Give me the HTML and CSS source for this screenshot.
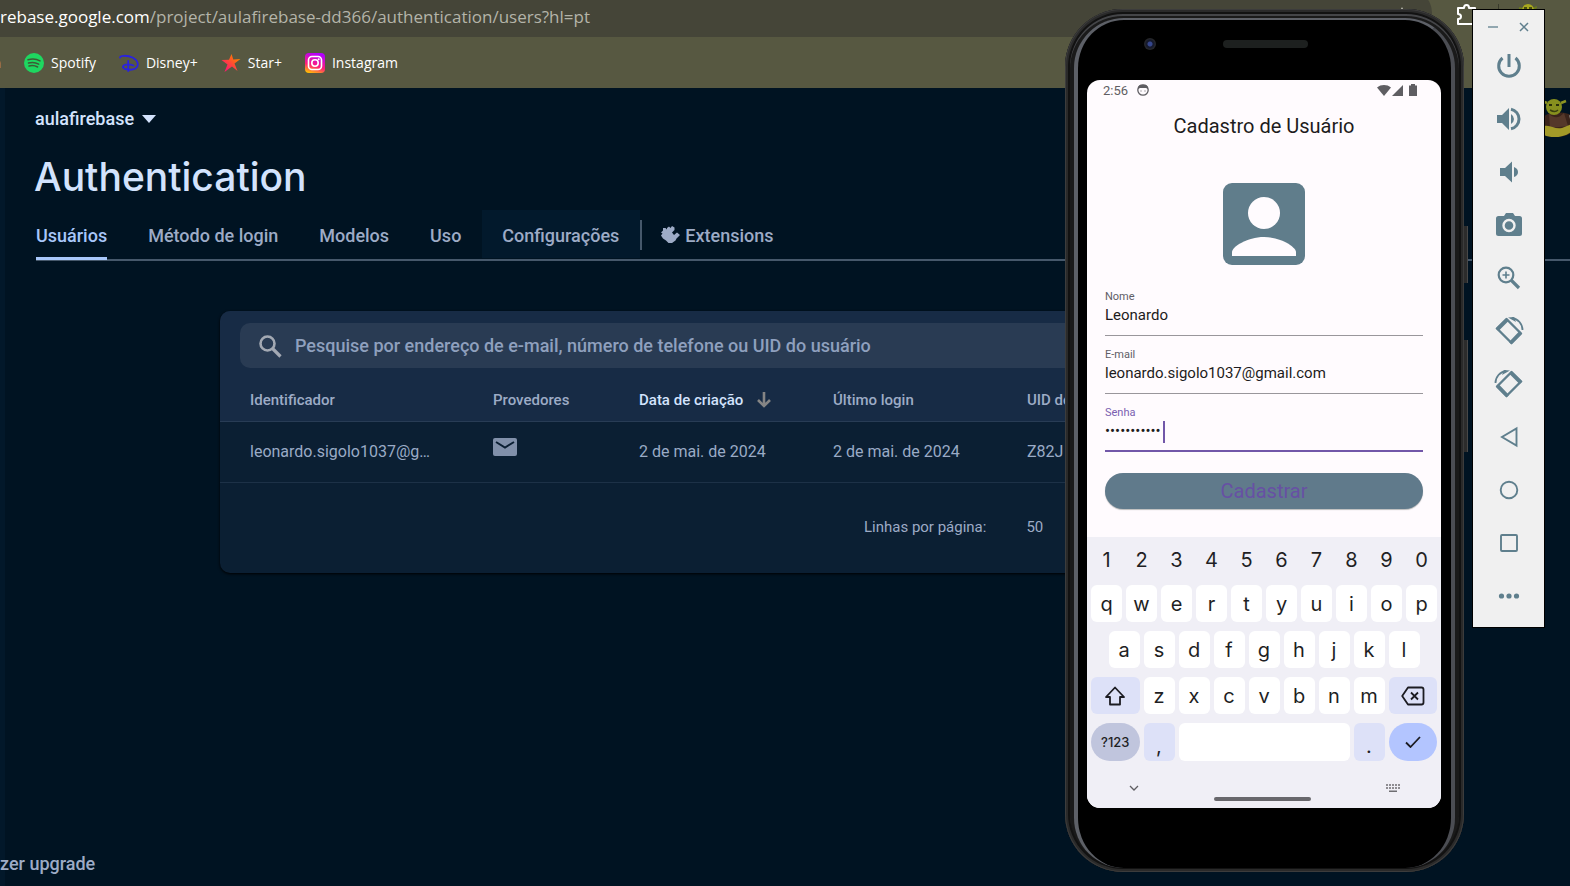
FILE: index.html
```html
<!DOCTYPE html>
<html lang="pt-BR">
<head>
<meta charset="utf-8">
<title>Authentication</title>
<link rel="stylesheet" href="styles.css">
</head>
<body>
<div class="desktop">
  <header class="browser">
    <div class="url-row">
      <div class="url"><span class="url-host">rebase.google.com</span>/project/aulafirebase-dd366/authentication/users?hl=pt
        <svg class="share" width="8" height="10" viewBox="0 0 8 10"><path d="M4 0l2 5v5H2V5z" fill="#e8e8e0"/></svg>
      </div>
      <div class="ext">
        <svg width="22" height="22" viewBox="0 0 22 22"><path d="M2 4h6c0-4 5-4 5 0h6v16H2v-5c4 0 4-5 0-5z" fill="none" stroke="#fff" stroke-width="2" stroke-linejoin="round"/></svg>
        <span class="ext-sep"></span>
        <svg width="18" height="18" viewBox="0 0 18 18"><path d="M4 5l-4-1M14 5l4-2" stroke="#6b7a1c" stroke-width="2"/><circle cx="9" cy="6" r="6" fill="#a8a81e"/><path d="M5 4h3M10 4h3" stroke="#2a2f0b" stroke-width="1.500"/></svg>
      </div>
    </div>
    <nav class="bookmarks" aria-label="Favoritos">
      <a class="bookmark cut" href="#">n</a>
      <a class="bookmark" href="#"><svg width="20" height="20" viewBox="0 0 20 20"><circle cx="10" cy="10" r="10" fill="#1ed760"/><path d="M4 6.800c4-1.200 8.500-.9 12 1.100M4.500 10c3.500-1 7.200-.6 10.200 1.100M5 13c3-.8 6-.5 8.600 1" fill="none" stroke="#3d5a35" stroke-width="1.500" stroke-linecap="round"/></svg>Spotify</a>
      <a class="bookmark" href="#"><svg width="20" height="20" viewBox="0 0 20 20"><path d="M1 4.500C1 2.500 8 1.800 14 4.800c5 2.700 6.500 8 2.500 10.700C13 17.500 6 17 4 14.500c-.8-3 5-4 10.500-2M9.200 8v10" fill="none" stroke="#2a22e0" stroke-width="1.800" stroke-linecap="round"/></svg>Disney+</a>
      <a class="bookmark" href="#"><svg width="20" height="20" viewBox="0 0 20 20"><defs><linearGradient id="star" x1="0" y1="1" x2="1" y2="0"><stop offset=".2" stop-color="#ff1a6c"/><stop offset=".8" stop-color="#ff7a00"/></linearGradient></defs><path d="M10.500 1l1.800 5.500 7.200-.5-6 4.500 3 7.500-5.500-4.500L3.500 19l3-7.500L.5 7l7.500-.3z" fill="url(#star)"/></svg>Star+</a>
      <a class="bookmark" href="#"><svg width="20" height="20" viewBox="0 0 20 20"><defs><linearGradient id="ig" x1=".2" y1="1" x2=".5" y2="0"><stop offset="0" stop-color="#ffc400"/><stop offset=".4" stop-color="#ff1f7a"/><stop offset="1" stop-color="#b300ff"/></linearGradient></defs><rect width="20" height="20" rx="4" fill="url(#ig)"/><rect x="3.500" y="3.500" width="13" height="13" rx="3.500" fill="none" stroke="#fff" stroke-width="1.600"/><circle cx="10" cy="10" r="3.200" fill="none" stroke="#fff" stroke-width="1.600"/><circle cx="13.700" cy="6.300" r="1" fill="#fff"/></svg>Instagram</a>
    </nav>
  </header>

  <div class="console">
    <aside class="rail"><span class="upgrade">zer upgrade</span></aside>
    <main class="main">
      <button class="project" type="button">aulafirebase
        <svg width="14" height="8" viewBox="0 0 14 8"><path d="M0 0h14L7 8z" fill="currentColor"/></svg>
      </button>
      <h1 class="title">Authentication</h1>
      <nav class="tabs">
        <a class="tab active" href="#">Usuários</a>
        <a class="tab" href="#">Método de login</a>
        <a class="tab" href="#">Modelos</a>
        <a class="tab" href="#">Uso</a>
        <a class="tab hover" href="#">Configurações</a>
        <span class="tab-sep"></span>
        <a class="tab with-icon" href="#"><svg width="19" height="18" viewBox="0 0 19 18"><path d="M2 2h2.500L6 3.500V2l2-1.500L9.500 2 11 0l2.500 1.500V4L11 6.500 13 9l3-2.500L19 9l-3.500 3.500-1 2L11 17H7.500L5 14.500 2 12.500 0 9.500l1.500-2L0 6.500 2 4.500z" fill="currentColor"/></svg>Extensions</a>
      </nav>

      <section class="card">
        <div class="card-head">
          <label class="search">
            <svg width="24" height="24" viewBox="0 0 24 24"><circle cx="9.500" cy="9.500" r="7" fill="none" stroke="#a3a9b3" stroke-width="2.600"/><path d="M14.500 14.500l8 8" stroke="#a3a9b3" stroke-width="3.200"/></svg>
            <input class="search-input" type="text" aria-label="Pesquisar usuários" placeholder="Pesquise por endereço de e-mail, número de telefone ou UID do usuário">
          </label>
        </div>
        <table class="users">
          <colgroup><col class="c-id"><col class="c-prov"><col class="c-date"><col class="c-date"><col></colgroup>
          <thead>
            <tr><th>Identificador</th><th>Provedores</th><th class="sorted"><span class="sort">Data de criação <svg width="14" height="16" viewBox="0 0 14 16"><path d="M7 0v13M1 8l6 6 6-6" fill="none" stroke="#858585" stroke-width="2.600"/></svg></span></th><th>Último login</th><th>UID do usuário</th></tr>
          </thead>
          <tbody>
            <tr><td>leonardo.sigolo1037@g…</td><td><svg class="mail" width="24" height="18" viewBox="0 0 24 18"><rect width="24" height="18" rx="2" fill="#8190aa"/><path d="M3 4l9 5.500L21 4" fill="none" stroke="#0b1f33" stroke-width="2"/></svg></td><td>2 de mai. de 2024</td><td>2 de mai. de 2024</td><td>Z82J</td></tr>
          </tbody>
        </table>
        <footer class="pager"><span>Linhas por página:</span><span>50</span></footer>
      </section>
    </main>
  </div>

  <svg class="account" width="34" height="40" viewBox="0 0 34 40"><path d="M5 5l-5-2M19 5l5-2" stroke="#8c9422" stroke-width="2.500"/><path d="M1 20C5 13 22 12 33 19l1 12c-7 8-20 9-28 7-5-3-6-12-5-18z" fill="#3b241b"/><path d="M7 16c6 5 10 4 15-1l4 13-18 2z" fill="#55382a"/><circle cx="12" cy="9" r="8" fill="#87901e"/><path d="M0 29c7-4 12 3 20 1l10-4v7c-6 6-20 8-28 4z" fill="#a39a28"/><path d="M7 7h3M14 7h3" stroke="#2a2f0b" stroke-width="2"/><path d="M8 12q5 3 8 0" stroke="#3a3f10" stroke-width="1.500" fill="none"/><path d="M27 17l6 3-3 9z" fill="#8d8b86"/></svg>

  <section class="phone" aria-label="Emulador">
    <span class="side-key power"></span>
    <span class="side-key volume"></span>
    <div class="bezel">
      <div class="earpiece"><span class="camera"></span><span class="speaker"></span></div>
      <div class="screen">
        <div class="status">
          <span>2:56</span>
          <svg width="12" height="12" viewBox="0 0 12 12"><circle cx="6" cy="6" r="5.200" fill="none" stroke="#5f5e62" stroke-width="1.300"/><path d="M1 5V3l2-2.200h6L11 3v2L9 4H3z" fill="#5f5e62"/><path d="M4 6.500v1M8 6.500v1" stroke="#5f5e62"/></svg>
          <span class="status-icons">
            <svg width="14" height="11" viewBox="0 0 14 11"><path d="M0 2.500C4-.8 10-.8 14 2.500L7 11z" fill="#5f5e62"/></svg>
            <svg width="11" height="11" viewBox="0 0 11 11"><path d="M11 0v11H0z" fill="#5f5e62"/></svg>
            <svg class="battery" width="8" height="12" viewBox="0 0 8 12"><path d="M2 0h4v1.500h2V12H0V1.500h2z" fill="#5f5e62"/></svg>
          </span>
        </div>
        <h2 class="app-title">Cadastro de Usuário</h2>
        <form class="form">
          <svg class="avatar" width="82" height="82" viewBox="0 0 82 82"><rect width="82" height="82" rx="9" fill="#607d8b"/><circle cx="41" cy="30" r="16" fill="#fffbfe"/><path d="M9 73v-4c0-5 15-15 32-15s32 10 32 15v4z" fill="#fffbfe"/></svg>
          <label class="field"><span class="field-label">Nome</span><input class="field-input" type="text" value="Leonardo"></label>
          <label class="field"><span class="field-label">E-mail</span><input class="field-input" type="text" value="leonardo.sigolo1037@gmail.com"></label>
          <label class="field focused"><span class="field-label">Senha</span><span class="secret"><input class="field-input dots" type="text" value="•••••••••••"><span class="caret"></span></span></label>
          <button class="submit" type="button">Cadastrar</button>
        </form>
        <div class="keyboard">
          <div class="keys digits"><button class="key">1</button><button class="key">2</button><button class="key">3</button><button class="key">4</button><button class="key">5</button><button class="key">6</button><button class="key">7</button><button class="key">8</button><button class="key">9</button><button class="key">0</button></div>
          <div class="keys"><button class="key">q</button><button class="key">w</button><button class="key">e</button><button class="key">r</button><button class="key">t</button><button class="key">y</button><button class="key">u</button><button class="key">i</button><button class="key">o</button><button class="key">p</button></div>
          <div class="keys"><button class="key indent">a</button><button class="key">s</button><button class="key">d</button><button class="key">f</button><button class="key">g</button><button class="key">h</button><button class="key">j</button><button class="key">k</button><button class="key">l</button></div>
          <div class="keys"><button class="key wide tint" aria-label="Shift"><svg width="20" height="20" viewBox="0 0 20 20"><path d="M10 1.500L19 11h-4v7.500H5V11H1z" fill="none" stroke="#1c1c22" stroke-width="1.800" stroke-linejoin="round"/></svg></button><button class="key">z</button><button class="key">x</button><button class="key">c</button><button class="key">v</button><button class="key">b</button><button class="key">n</button><button class="key">m</button><button class="key wide tint" aria-label="Apagar"><svg width="24" height="20" viewBox="0 0 24 20"><path d="M7 1.500h13.500a2 2 0 0 1 2 2v13a2 2 0 0 1-2 2H7L1.200 10z" fill="none" stroke="#1c1c22" stroke-width="1.800" stroke-linejoin="round"/><path d="M10 6.500l7 7M17 6.500l-7 7" stroke="#1c1c22" stroke-width="1.800"/></svg></button></div>
          <div class="keys last"><button class="key wide symbols">?123</button><button class="key tint punct">,</button><button class="key space" aria-label="Espaço"></button><button class="key tint punct">.</button><button class="key wide enter" aria-label="Concluir"><svg width="16" height="12" viewBox="0 0 16 12"><path d="M1 6.500L5.500 11 15 1" fill="none" stroke="#1c1c22" stroke-width="1.800"/></svg></button></div>
          <div class="nav-bar">
            <svg width="10" height="6" viewBox="0 0 10 6"><path d="M1 1l4 4 4-4" fill="none" stroke="#5f5e62" stroke-width="1.300"/></svg>
            <span class="handle"></span>
            <svg width="14" height="8" viewBox="0 0 14 8"><path d="M0 1h14M0 4h14" stroke="#6f6e72" stroke-width="1.600" stroke-dasharray="2 1"/><path d="M3 7.200h8" stroke="#6f6e72" stroke-width="1.400"/></svg>
          </div>
        </div>
      </div>
    </div>
  </section>

  <section class="tools" aria-label="Controles do emulador">
    <div class="tools-window">
      <button class="tool-small" aria-label="Minimizar"><svg width="10" height="10" viewBox="0 0 10 10"><path d="M0 5h10" stroke="#5f7f8d" stroke-width="1.300"/></svg></button>
      <button class="tool-small" aria-label="Fechar"><svg width="10" height="10" viewBox="0 0 10 10"><path d="M1 1l8 8M9 1L1 9" stroke="#5f7f8d" stroke-width="1.500"/></svg></button>
    </div>
    <button class="tool" aria-label="Ligar"><svg viewBox="0 0 30 30"><path d="M8.500 7a10.300 10.300 0 1 0 13 0M15 3v13" fill="none" stroke="currentColor" stroke-width="3"/></svg></button>
    <button class="tool" aria-label="Aumentar volume"><svg viewBox="0 0 30 30"><path d="M3 11h5l7-7v22l-7-7H3z" fill="currentColor"/><path d="M17 10v10q3-2 3-5t-3-5z" fill="currentColor"/><path d="M17 5.200a10 10 0 0 1 0 19.600" fill="none" stroke="currentColor" stroke-width="3"/></svg></button>
    <button class="tool" aria-label="Diminuir volume"><svg viewBox="0 0 30 30"><path d="M6 11h5l7-6.500v21L11 19H6z" fill="currentColor"/><path d="M20 10v10q4-1.500 4-5t-4-5z" fill="currentColor"/></svg></button>
    <button class="tool" aria-label="Captura de tela"><svg viewBox="0 0 30 30"><path d="M4.500 6H10l2-3h7l2 3h4.500A2.500 2.500 0 0 1 28 8.500v15a2.500 2.500 0 0 1-2.500 2.500h-21A2.500 2.500 0 0 1 2 23.500v-15A2.500 2.500 0 0 1 4.500 6z" fill="currentColor"/><circle cx="15" cy="15.500" r="5.500" fill="none" stroke="#f0f0f0" stroke-width="2.400"/></svg></button>
    <button class="tool" aria-label="Zoom"><svg viewBox="0 0 30 30"><circle cx="12" cy="12" r="7.300" fill="none" stroke="currentColor" stroke-width="2.200"/><path d="M17 17l8 8" stroke="currentColor" stroke-width="3.200"/><path d="M12 8.500v7M8.500 12h7" stroke="currentColor" stroke-width="1.600"/></svg></button>
    <button class="tool" aria-label="Girar à esquerda"><svg viewBox="0 0 30 30"><g id="rot"><path d="M12.500 3L27 17.500 17.500 27 3 12.500z" fill="none" stroke="currentColor" stroke-width="2.400" stroke-linejoin="round"/><path d="M12.500 2L15 4.500 4.500 15 1.500 12.500zM25.500 15L28 17.500 17.500 28.500 15 26z" fill="currentColor"/><path d="M18 2a12 12 0 0 1 10.500 12" fill="none" stroke="currentColor" stroke-width="1.800"/><path d="M14 1.500L20 1l2 5z" fill="currentColor"/></g></svg></button>
    <button class="tool" aria-label="Girar à direita"><svg viewBox="0 0 30 30"><use href="#rot" transform="translate(30 0) scale(-1 1)"/></svg></button>
    <button class="tool" aria-label="Voltar"><svg viewBox="0 0 30 30"><path d="M22.500 6.500v17L8 15z" fill="none" stroke="currentColor" stroke-width="1.900"/></svg></button>
    <button class="tool" aria-label="Início"><svg viewBox="0 0 30 30"><circle cx="15" cy="15" r="8.300" fill="none" stroke="currentColor" stroke-width="1.900"/></svg></button>
    <button class="tool" aria-label="Visão geral"><svg viewBox="0 0 30 30"><rect x="7" y="7" width="16" height="16" rx="1" fill="none" stroke="currentColor" stroke-width="1.900"/></svg></button>
    <button class="tool" aria-label="Mais"><svg viewBox="0 0 30 30"><g fill="currentColor"><circle cx="7.500" cy="15" r="2.600"/><circle cx="15" cy="15" r="2.600"/><circle cx="22.500" cy="15" r="2.600"/></g></svg></button>
  </section>
</div>
</body>
</html>
```
FILE: styles.css
```css
* { box-sizing: border-box; }
body { margin: 0; background: #001322; font-family: Roboto, "Liberation Sans", sans-serif; }
button { font: inherit; color: inherit; background: none; border: 0; padding: 0; }
input { font: inherit; color: inherit; background: none; border: 0; padding: 0; min-width: 0; outline: 0; }
a { color: inherit; text-decoration: none; }
svg { display: block; flex: none; }

.desktop { position: relative; min-height: 100vh; display: flex; flex-direction: column; overflow: hidden; }

.browser { background: #575841; color: #fff; font-family: "Open Sans", "Noto Sans", sans-serif; }
.url-row { display: flex; height: 37px; }
.url { flex: 1; position: relative; margin-top: -11px; padding-top: 11px; border-radius: 0 24px 24px 0; background: #454538; color: #b4b4a9; font-size: 17px; line-height: 33px; white-space: nowrap; }
.url-host { color: #fff; }
.share { position: absolute; right: 26px; top: 18px; }
.ext { width: 138px; padding: 4px 0 0 24px; display: flex; gap: 20px; }
.ext-sep { width: 1px; height: 12px; background: #3a3b2d; }
.bookmarks { display: flex; align-items: center; gap: 23px; height: 51px; font-size: 14px; }
.bookmark { display: flex; align-items: center; gap: 7px; }
.cut { width: 1px; justify-content: flex-end; }

.console { flex: 1; display: flex; color: #9dabc6; }
.rail { width: 5px; background: #02182a; display: flex; align-items: flex-end; padding-bottom: 10px; white-space: nowrap; font-size: 18px; line-height: 24px; font-weight: 500; }
.main { flex: 1; min-width: 0; padding-top: 19px; }
.project { display: flex; align-items: center; gap: 8px; margin-left: 30px; font-size: 18px; line-height: 24px; font-weight: 500; color: #d3e3fd; }
.title { margin: 20px 0 9px 29px; font-family: Inter, Roboto, sans-serif; font-weight: 500; font-size: 39px; line-height: 51px; color: #d3e3fd; }
.tabs { display: flex; align-items: center; margin-left: 31px; height: 50px; border-bottom: 2px solid #46586b; font-size: 18px; font-weight: 500; }
.tab { display: flex; align-items: center; height: 50px; padding: 0 21px 0 20px; white-space: nowrap; }
.tab.active { margin: 0 21px 0 0; padding: 0; color: #a8c7fa; border-bottom: 3px solid #a8c7fa; border-top: 3px solid transparent; }
.tab.hover { background: linear-gradient(#02192c, #02192c) top / 100% 48px no-repeat; }
.tab.with-icon { gap: 5px; padding-left: 19px; }
.tab-sep { width: 2px; height: 30px; background: #46586b; }

.card { margin: 50px 130px 0 215px; border-radius: 10px; overflow: hidden; background: #0b1f33; box-shadow: 0 1px 3px #000; }
.card-head { padding: 12px 20px; background: #172b45; }
.search { display: flex; align-items: center; gap: 13px; height: 45px; padding: 0 18px; border-radius: 10px; background: #293b53; font-size: 18px; font-weight: 500; }
.search-input { flex: 1; }
.search-input::placeholder { color: #8fa0be; opacity: 1; }
.users { width: 100%; border-collapse: collapse; table-layout: fixed; font-size: 16px; }
.users th, .users td { padding: 0 0 0 30px; text-align: left; white-space: nowrap; }
.users th:nth-child(n+2), .users td:nth-child(n+2) { padding-left: 0; }
.users th { height: 41px; background: #172b45; border-bottom: 1px solid #283c55; font-size: 15px; font-weight: 500; }
.users td { height: 61px; border-bottom: 1px solid #1d3147; color: #9aabc6; }
.users .sorted { color: #d3e3fd; }
.sort { display: flex; align-items: center; gap: 14px; }
.c-id { width: 273px; } .c-prov { width: 146px; } .c-date { width: 194px; }
.mail { margin-bottom: 10px; }
.pager { display: flex; gap: 40px; height: 90px; align-items: center; padding: 0 0 2px 644px; font-size: 15px; }

.account { position: absolute; right: -6px; top: 98px; }

.phone { position: absolute; right: 106px; top: 9px; width: 399px; padding: 9px 9px 4px 9px; border-radius: 58px; background: #1a1a1a; box-shadow: inset 0 0 0 1px #3c3c3c, inset 0 0 0 3px #2a2a2a, inset 0 0 0 5px #121212, inset 0 2px 0 5px #444548; }
.side-key { position: absolute; right: -4px; width: 4px; background: #2c2c2c; border-right: 1px solid #484848; }
.power { top: 217px; height: 57px; }
.volume { top: 331px; height: 112px; }
.bezel { padding: 0 10px 60px 9px; border: 4px solid #5d6067; border-top-width: 2px; border-right-color: #4b4d53; border-bottom-width: 0; border-radius: 50px; background: #000; }
.earpiece { position: relative; height: 60px; }
.camera { position: absolute; left: 57px; top: 18px; width: 12px; height: 12px; border-radius: 50%; background: radial-gradient(#35468c 0 2px, #15192c 3px 4px, #25262a 5px); }
.speaker { position: absolute; left: 136px; top: 20px; width: 85px; height: 8px; border-radius: 4px; background: #1d201f; }
.screen { height: 728px; border-radius: 13px; overflow: hidden; background: #fffbfe; display: flex; flex-direction: column; color: #1d1b20; }
.status { display: flex; align-items: center; gap: 9px; height: 20px; padding: 0 24px 0 16px; font-size: 13px; color: #5f5e62; }
.status-icons { display: flex; align-items: center; gap: 1px; margin-left: auto; }
.battery { margin-left: 5px; }
.app-title { margin: 14px 0 0; text-align: center; font-size: 20px; line-height: 24px; font-weight: 400; }
.form { flex: 1; display: flex; flex-direction: column; padding: 45px 18px 0 18px; }
.avatar { align-self: center; margin-bottom: 24px; }
.field { display: flex; flex-direction: column; height: 47px; margin-bottom: 11px; border-bottom: 1px solid #99969b; color: #1d1b20; }
.field-label { font-size: 11px; line-height: 16px; color: #605d66; }
.field-input { font-size: 15px; line-height: 20px; height: 20px; width: 100%; }
.focused { border-bottom: 2px solid #7257a9; }
.focused .field-label { color: #7a60b0; }
.secret { display: flex; }
.field-input.dots { width: 58px; }
.caret { width: 2px; height: 22px; background: #7257a9; }
.submit { height: 36px; margin-top: 10px; border-radius: 18px; background: #607a8b; color: #6750a4; font-size: 20px; box-shadow: 0 1px 1px #bbb; }

.keyboard { height: 271px; padding: 4px 4px 0 4px; background: #f0eff6; display: flex; flex-direction: column; gap: 9px; font-family: Inter, Roboto, sans-serif; }
.keys { display: grid; grid-template-columns: repeat(20, 1fr); gap: 4px; height: 37px; }
.key { grid-column: span 2; border-radius: 6px; background: #fff; font-size: 20px; line-height: 24px; color: #1f1f24; display: flex; align-items: center; justify-content: center; }
.digits { height: 35px; padding-top: 3px; }
.digits .key { background: none; }
.indent { grid-column: 2 / span 2; }
.wide { grid-column: span 3; }
.tint { background: #dde1f8; }
.last { height: 38px; }
.symbols { border-radius: 19px; background: #c0c5dd; font-size: 13px; font-weight: 500; }
.enter { border-radius: 19px; background: #b3c5ff; }
.space { grid-column: span 10; }
.punct { align-items: flex-end; padding-bottom: 3px; }
.nav-bar { display: flex; align-items: center; justify-content: space-between; padding: 5px 37px 0 38px; }
.handle { width: 97px; height: 4px; margin-top: 22px; border-radius: 2px; background: #68676c; }

.tools { position: absolute; right: 25px; top: 9px; width: 73px; padding-bottom: 5px; border: 1px solid #000; background: #f0f0f0; display: flex; flex-direction: column; align-items: center; color: #5f7f8d; }
.tools-window { display: flex; align-items: center; gap: 21px; height: 29px; padding-top: 4px; }
.tool { width: 30px; height: 53px; display: flex; align-items: center; }
.tool svg { width: 30px; height: 30px; }
```
